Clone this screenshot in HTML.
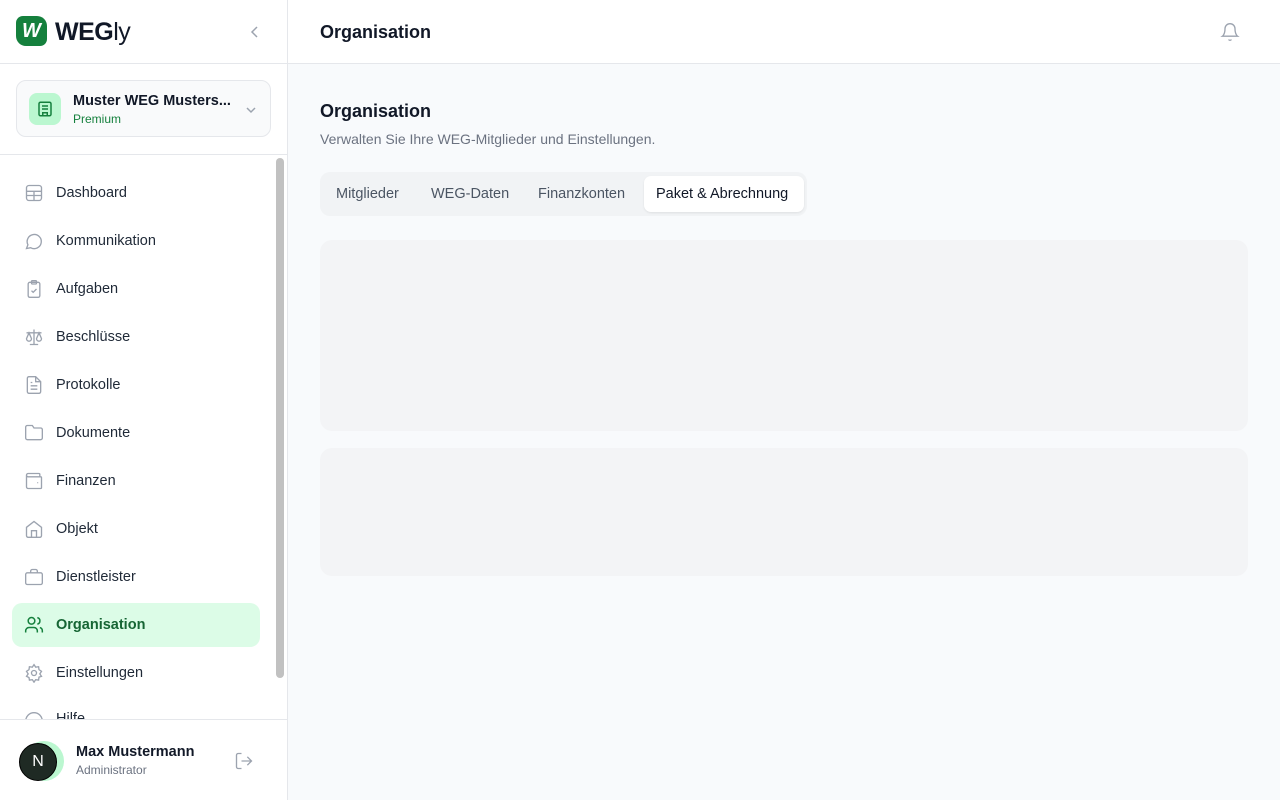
<!DOCTYPE html>
<html><head><meta charset="utf-8"><style>
*{box-sizing:border-box;margin:0;padding:0}
body{width:1280px;height:800px;overflow:hidden;font-family:"Liberation Sans",sans-serif;background:#f8fafc;position:relative;color:#111827}
.sb{position:absolute;left:0;top:0;width:288px;height:800px;background:#fff;border-right:1px solid #e5e7eb}
.logo{position:absolute;left:16px;top:16px;height:30px;display:flex;align-items:center}
.logo .w{width:31px;height:30px;background:#15803d;border-radius:7px 10px 7px 10px;color:#fff;font-weight:900;font-size:20px;display:flex;align-items:center;justify-content:center;font-style:italic}
.logo .t{margin-left:8px;font-size:25px;font-weight:900;letter-spacing:-0.5px;color:#111827;margin-top:3px}
.logo .t span{font-weight:400}
.hline{position:absolute;left:0;width:287px;height:1px;background:#e5e7eb}
.org{position:absolute;left:16px;top:80px;width:255px;height:57px;border:1px solid #e5e7eb;border-radius:10px;background:#f9fafb}
.org .ic{position:absolute;left:12px;top:12px;width:32px;height:32px;border-radius:8px;background:#bbf7d0;display:flex;align-items:center;justify-content:center}
.org .n{position:absolute;left:56px;top:12px;font-size:14.5px;font-weight:600;color:#111827}
.org .p{position:absolute;left:56px;top:31px;font-size:12px;color:#15803d}
.nav{position:absolute;left:12px;width:248px;height:44px;border-radius:10px;font-size:14.5px;color:#1f2937}
.nav svg{position:absolute;left:12px;top:12px}
.nav span{position:absolute;left:44px;top:14px}
.nav.a{background:#dcfce7;color:#166534;font-weight:600}
.scroll{position:absolute;left:276px;top:158px;width:8px;height:520px;background:#c1c1c1;border-radius:4px}
.foot{position:absolute;left:0;top:719px;width:287px;height:81px;background:#fff;border-top:1px solid #e5e7eb}
.top{position:absolute;left:288px;top:0;width:992px;height:64px;background:#fff;border-bottom:1px solid #e5e7eb}
.sk{position:absolute;left:320px;width:928px;background:#f3f4f6;border-radius:12px}
</style></head><body>
<div class="sb">
 <div class="logo"><div class="w">W</div><div class="t">WEG<span>ly</span></div></div>
 <svg style="position:absolute;left:249px;top:25px" width="12" height="14" viewBox="0 0 12 14" fill="none" stroke="#9ca3af" stroke-width="1.5"><path d="M8 2 3 7l5 5"/></svg>
 <div class="hline" style="top:63px"></div>
 <div class="org"><div class="ic"><svg width="18" height="18" viewBox="0 0 24 24" fill="none" stroke="#15803d" stroke-width="2"><rect x="4" y="3" width="16" height="18" rx="2"/><path d="M9 21v-4h6v4M8 8h8M8 12h8"/></svg></div>
 <div class="n">Muster WEG Musters...</div><div class="p">Premium</div>
 <svg style="position:absolute;right:12px;top:22px" width="14" height="14" viewBox="0 0 14 14" fill="none" stroke="#9ca3af" stroke-width="1.5"><path d="M3 5l4 4 4-4"/></svg></div>
 <div class="hline" style="top:154px"></div>
 <div class="nav" style="top:171px"><svg width="20" height="20" viewBox="0 0 24 24" fill="none" stroke="#9ca3af" stroke-width="1.6"><rect x="3" y="3" width="18" height="18" rx="3"/><path d="M3 10h18M3 15h18M12 10v11"/></svg><span>Dashboard</span></div>
 <div class="nav" style="top:219px"><svg width="20" height="20" viewBox="0 0 24 24" fill="none" stroke="#9ca3af" stroke-width="1.6"><path d="M3 21l1.7-4.5A8.5 8.5 0 1 1 8 20z"/></svg><span>Kommunikation</span></div>
 <div class="nav" style="top:267px"><svg width="20" height="20" viewBox="0 0 24 24" fill="none" stroke="#9ca3af" stroke-width="1.6"><rect x="5" y="4" width="14" height="18" rx="2"/><rect x="9" y="2" width="6" height="4" rx="1"/><path d="M9 14l2 2 4-4"/></svg><span>Aufgaben</span></div>
 <div class="nav" style="top:315px"><svg width="20" height="20" viewBox="0 0 24 24" fill="none" stroke="#9ca3af" stroke-width="1.6"><path d="M12 3v18M7 21h10M3 7h18M6 7l-3 7a3 3 0 0 0 6 0zM18 7l-3 7a3 3 0 0 0 6 0z"/></svg><span>Beschlüsse</span></div>
 <div class="nav" style="top:363px"><svg width="20" height="20" viewBox="0 0 24 24" fill="none" stroke="#9ca3af" stroke-width="1.6"><path d="M14 2H6a2 2 0 0 0-2 2v16a2 2 0 0 0 2 2h12a2 2 0 0 0 2-2V8z"/><path d="M14 2v6h6M8 13h8M8 17h8M8 9h2"/></svg><span>Protokolle</span></div>
 <div class="nav" style="top:411px"><svg width="20" height="20" viewBox="0 0 24 24" fill="none" stroke="#9ca3af" stroke-width="1.6"><path d="M20 20a2 2 0 0 0 2-2V8a2 2 0 0 0-2-2h-8l-2-3H4a2 2 0 0 0-2 2v13a2 2 0 0 0 2 2z"/></svg><span>Dokumente</span></div>
 <div class="nav" style="top:459px"><svg width="20" height="20" viewBox="0 0 24 24" fill="none" stroke="#9ca3af" stroke-width="1.6"><path d="M19 7V4a1 1 0 0 0-1-1H5a2 2 0 0 0 0 4h15a1 1 0 0 1 1 1v12a1 1 0 0 1-1 1H5a2 2 0 0 1-2-2V5"/><path d="M16 14h1"/></svg><span>Finanzen</span></div>
 <div class="nav" style="top:507px"><svg width="20" height="20" viewBox="0 0 24 24" fill="none" stroke="#9ca3af" stroke-width="1.6"><path d="M3 10l9-7 9 7v10a2 2 0 0 1-2 2H5a2 2 0 0 1-2-2z"/><path d="M9 22v-8h6v8"/></svg><span>Objekt</span></div>
 <div class="nav" style="top:555px"><svg width="20" height="20" viewBox="0 0 24 24" fill="none" stroke="#9ca3af" stroke-width="1.6"><rect x="2" y="7" width="20" height="14" rx="2"/><path d="M16 7V5a2 2 0 0 0-2-2h-4a2 2 0 0 0-2 2v2"/></svg><span>Dienstleister</span></div>
 <div class="nav a" style="top:603px"><svg width="20" height="20" viewBox="0 0 24 24" fill="none" stroke="#15803d" stroke-width="1.8"><circle cx="9" cy="7" r="4"/><path d="M2 21v-2a4 4 0 0 1 4-4h6a4 4 0 0 1 4 4v2M16 3.1a4 4 0 0 1 0 7.8M22 21v-2a4 4 0 0 0-3-3.9"/></svg><span>Organisation</span></div>
 <div class="nav" style="top:651px"><svg width="20" height="20" viewBox="0 0 24 24" fill="none" stroke="#9ca3af" stroke-width="1.6"><circle cx="12" cy="12" r="3"/><path d="M12 2l2 3 3.5-.5.5 3.5 3 2-2 3 2 3-3 1-.5 3.5-3.5-.5-2 3-2-3-3.5.5L6 17.5 3 16l2-3-2-3 3-2 .5-3.5L10 5z"/></svg><span>Einstellungen</span></div>
 <div class="nav" style="top:699px;overflow:hidden;height:20px"><svg style="top:12px" width="20" height="20" viewBox="0 0 24 24" fill="none" stroke="#9ca3af" stroke-width="1.6"><circle cx="12" cy="12" r="10"/></svg><span style="top:12px">Hilfe</span></div>
 <div class="scroll"></div>
 <div class="foot">
  <div style="position:absolute;left:24px;top:21px;width:40px;height:40px;border-radius:50%;background:#bbf7d0"></div>
  <div style="position:absolute;left:19px;top:23px;width:38px;height:38px;border-radius:50%;background:#1f2a24;border:1px solid #000;color:#fff;font-size:16px;display:flex;align-items:center;justify-content:center">N</div>
  <div style="position:absolute;left:76px;top:24px;font-size:14.5px;font-weight:600">Max Mustermann</div>
  <div style="position:absolute;left:76px;top:43px;font-size:12px;color:#6b7280">Administrator</div>
  <svg style="position:absolute;left:234px;top:31px" width="20" height="20" viewBox="0 0 24 24" fill="none" stroke="#9ca3af" stroke-width="1.6"><path d="M9 21H5a2 2 0 0 1-2-2V5a2 2 0 0 1 2-2h4M16 17l5-5-5-5M21 12H9"/></svg>
 </div>
</div>
<div class="top">
 <div style="position:absolute;left:32px;top:22px;font-size:18px;font-weight:600">Organisation</div>
 <svg style="position:absolute;left:932px;top:22px" width="20" height="20" viewBox="0 0 24 24" fill="none" stroke="#9ca3af" stroke-width="1.6"><path d="M6 8a6 6 0 0 1 12 0c0 7 3 9 3 9H3s3-2 3-9M10.3 21a1.9 1.9 0 0 0 3.4 0"/></svg>
</div>
<div style="position:absolute;left:320px;top:101px;font-size:18px;font-weight:600">Organisation</div>
<div style="position:absolute;left:320px;top:131px;font-size:14px;color:#6b7280">Verwalten Sie Ihre WEG-Mitglieder und Einstellungen.</div>
<div style="position:absolute;left:320px;top:172px;width:487px;height:44px;background:#f1f3f5;border-radius:10px;font-size:14.5px;color:#4b5563">
 <span style="position:absolute;left:16px;top:14px">Mitglieder</span>
 <span style="position:absolute;left:111px;top:14px">WEG-Daten</span>
 <span style="position:absolute;left:218px;top:14px">Finanzkonten</span>
 <div style="position:absolute;left:324px;top:4px;width:160px;height:36px;background:#fff;border-radius:7px;box-shadow:0 1px 2px rgba(0,0,0,.08);color:#111827"><span style="position:absolute;left:12px;top:10px">Paket &amp; Abrechnung</span></div>
</div>
<div class="sk" style="top:240px;height:191px"></div>
<div class="sk" style="top:448px;height:128px"></div>
</body></html>
